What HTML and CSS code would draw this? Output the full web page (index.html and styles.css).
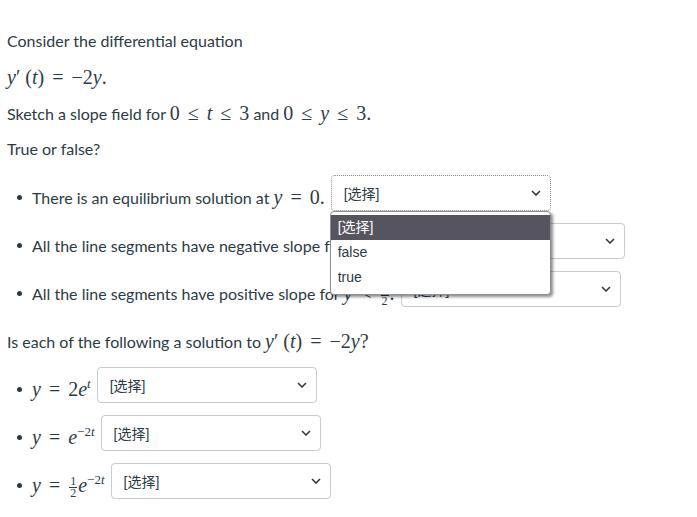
FILE: index.html
```html
<!DOCTYPE html>
<html>
<head>
<meta charset="utf-8">
<link rel="stylesheet" href="styles.css">
</head>
<body>
<div class="page">
  <p>Consider the differential equation</p>
  <p><span class="m"><i>y</i>′ (<i>t</i>) <span class="op">=</span> −2<i>y</i>.</span></p>
  <p>Sketch a slope field for <span class="m">0 <span class="op">≤</span> <i>t</i> <span class="op">≤</span> 3</span> and <span class="m">0 <span class="op">≤</span> <i>y</i> <span class="op">≤</span> 3.</span></p>
  <p>True or false?</p>
  <ul class="list">
    <li class="item">
      <span class="dot"></span>
      <span class="txt">There is an equilibrium solution at <span class="m"><i>y</i> <span class="op">=</span> 0.</span></span>
      <div class="sel sel-focus">
        <span class="sel-text">[选择]</span>
        <svg class="chev" width="10" height="6" viewBox="0 0 10 6"><path d="M1 1 L5 5 L9 1" fill="none" stroke="#2d3b45" stroke-width="1.6"/></svg>
        <div class="popup">
          <div class="opt opt-on">[选择]</div>
          <div class="opt">false</div>
          <div class="opt">true</div>
        </div>
      </div>
    </li>
    <li class="item">
      <span class="dot"></span>
      <span class="txt">All the line segments have negative slope for <span class="m"><i>y</i> <span class="op">&gt;</span> <span class="frac"><span class="num">1</span><span class="den">2</span></span>.</span></span>
      <div class="sel">
        <span class="sel-text">[选择]</span>
        <svg class="chev" width="10" height="6" viewBox="0 0 10 6"><path d="M1 1 L5 5 L9 1" fill="none" stroke="#2d3b45" stroke-width="1.6"/></svg>
      </div>
    </li>
    <li class="item">
      <span class="dot"></span>
      <span class="txt">All the line segments have positive slope for <span class="m"><i>y</i> <span class="op">&lt;</span> <span class="frac"><span class="num">1</span><span class="den">2</span></span>.</span></span>
      <div class="sel">
        <span class="sel-text">[选择]</span>
        <svg class="chev" width="10" height="6" viewBox="0 0 10 6"><path d="M1 1 L5 5 L9 1" fill="none" stroke="#2d3b45" stroke-width="1.6"/></svg>
      </div>
    </li>
  </ul>
  <p>Is each of the following a solution to <span class="m"><i>y</i>′ (<i>t</i>) <span class="op">=</span> −2<i>y</i>?</span></p>
  <ul class="list">
    <li class="item">
      <span class="dot"></span>
      <span class="txt"><span class="m"><i>y</i> <span class="op">=</span> 2<i>e</i><sup class="sup"><i>t</i></sup></span></span>
      <div class="sel">
        <span class="sel-text">[选择]</span>
        <svg class="chev" width="10" height="6" viewBox="0 0 10 6"><path d="M1 1 L5 5 L9 1" fill="none" stroke="#2d3b45" stroke-width="1.6"/></svg>
      </div>
    </li>
    <li class="item">
      <span class="dot"></span>
      <span class="txt"><span class="m"><i>y</i> <span class="op">=</span> <i>e</i><sup class="sup">−2<i>t</i></sup></span></span>
      <div class="sel">
        <span class="sel-text">[选择]</span>
        <svg class="chev" width="10" height="6" viewBox="0 0 10 6"><path d="M1 1 L5 5 L9 1" fill="none" stroke="#2d3b45" stroke-width="1.6"/></svg>
      </div>
    </li>
    <li class="item">
      <span class="dot"></span>
      <span class="txt"><span class="m"><i>y</i> <span class="op">=</span> <span class="frac"><span class="num">1</span><span class="den">2</span></span><i>e</i><sup class="sup">−2<i>t</i></sup></span></span>
      <div class="sel">
        <span class="sel-text">[选择]</span>
        <svg class="chev" width="10" height="6" viewBox="0 0 10 6"><path d="M1 1 L5 5 L9 1" fill="none" stroke="#2d3b45" stroke-width="1.6"/></svg>
      </div>
    </li>
  </ul>
</div>
</body>
</html>
```

FILE: styles.css
```css
html, body {
  margin: 0;
  padding: 0;
  background: #ffffff;
}
body {
  font-family: Lato, "Noto Sans CJK SC", sans-serif;
  font-size: 16px;
  color: #2d3b45;
}
.page {
  padding: 17px 7px 0 7px;
}
p {
  margin: 12px 0;
  line-height: 24px;
  height: 24px;
}
.m {
  font-family: "Liberation Serif", "DejaVu Serif", serif;
  font-size: 20px;
  white-space: nowrap;
}
.m i {
  font-style: italic;
}
.op {
  padding: 0 3px;
}
.sup {
  font-size: 13px;
  vertical-align: 8px;
  line-height: 0;
}
.frac {
  display: inline-flex;
  flex-direction: column;
  align-items: center;
  vertical-align: middle;
  font-size: 12px;
  line-height: 11px;
  margin: 0 1px;
}
.num {
  border-bottom: 1px solid #2d3b45;
  padding: 0 1px;
}
.list {
  list-style: none;
  margin: 12px 0;
  padding: 0;
}
.item {
  display: flex;
  align-items: center;
  height: 48px;
}
.dot {
  width: 5px;
  height: 5px;
  border-radius: 50%;
  background: #2d3b45;
  margin-left: 10px;
  margin-right: 10px;
  flex: none;
}
.txt {
  white-space: nowrap;
  line-height: 24px;
  height: 24px;
}
.sel {
  position: relative;
  box-sizing: border-box;
  width: 220px;
  height: 36px;
  margin-left: 6px;
  margin-bottom: 8px;
  border: 1px solid #c7cdd1;
  border-radius: 4px;
  background: #ffffff;
  display: flex;
  align-items: center;
  justify-content: space-between;
  padding: 0 9px 0 12px;
  flex: none;
}
.sel-focus {
  border: 1px dotted #8a8a8a;
}
.sel-text {
  font-family: "Liberation Sans", "Noto Sans CJK SC", sans-serif;
  font-size: 14px;
  color: #2d3b45;
}
.chev {
  display: block;
}
.popup {
  position: absolute;
  left: -2px;
  top: 35px;
  width: 221px;
  box-sizing: border-box;
  background: #ffffff;
  border: 1px solid #8f8f96;
  border-radius: 4px;
  box-shadow: 2px 2px 3px rgba(0, 0, 0, 0.45);
  padding: 3px 0 4px 0;
  z-index: 5;
}
.opt {
  height: 25px;
  line-height: 25px;
  padding-left: 7px;
  font-family: "Liberation Sans", "Noto Sans CJK SC", sans-serif;
  font-size: 14px;
  color: #2d3b45;
}
.opt-on {
  background: #55545f;
  color: #ffffff;
}
```
